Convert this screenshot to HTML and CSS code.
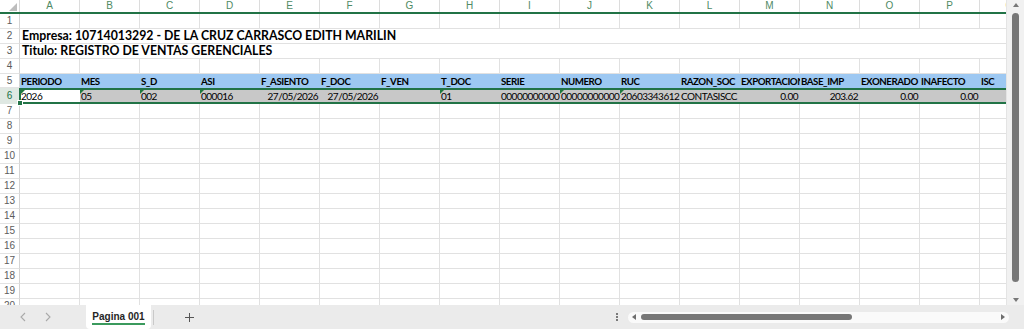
FILE: index.html
```html
<!DOCTYPE html>
<html lang="es">
<head>
<meta charset="utf-8">
<title>Pagina 001</title>
<link rel="stylesheet" href="styles.css">
</head>
<body>
<div class="app">
  <div class="main">
    <div class="sheet">
      <div class="row colhead">
        <div class="corner"><span class="corner-tri"></span></div>
        <div class="ch">A</div><div class="ch">B</div><div class="ch">C</div><div class="ch">D</div><div class="ch">E</div><div class="ch">F</div><div class="ch">G</div><div class="ch">H</div><div class="ch">I</div><div class="ch">J</div><div class="ch">K</div><div class="ch">L</div><div class="ch">M</div><div class="ch">N</div><div class="ch">O</div><div class="ch">P</div><div class="ch">Q</div>
      </div>
      <div class="row"><div class="rh">1</div><div class="c"></div><div class="c"></div><div class="c"></div><div class="c"></div><div class="c"></div><div class="c"></div><div class="c"></div><div class="c"></div><div class="c"></div><div class="c"></div><div class="c"></div><div class="c"></div><div class="c"></div><div class="c"></div><div class="c"></div><div class="c"></div><div class="c"></div></div>
      <div class="row"><div class="rh">2</div><div class="m">Empresa: 10714013292 - DE LA CRUZ CARRASCO EDITH MARILIN</div></div>
      <div class="row"><div class="rh">3</div><div class="m">Titulo: REGISTRO DE VENTAS GERENCIALES</div></div>
      <div class="row"><div class="rh">4</div><div class="c"></div><div class="c"></div><div class="c"></div><div class="c"></div><div class="c"></div><div class="c"></div><div class="c"></div><div class="c"></div><div class="c"></div><div class="c"></div><div class="c"></div><div class="c"></div><div class="c"></div><div class="c"></div><div class="c"></div><div class="c"></div><div class="c"></div></div>
      <div class="row hdr"><div class="rh">5</div><div class="c">PERIODO</div><div class="c">MES</div><div class="c">S_D</div><div class="c">ASI</div><div class="c">F_ASIENTO</div><div class="c">F_DOC</div><div class="c">F_VEN</div><div class="c">T_DOC</div><div class="c">SERIE</div><div class="c">NUMERO</div><div class="c">RUC</div><div class="c">RAZON_SOC</div><div class="c">EXPORTACION</div><div class="c">BASE_IMP</div><div class="c">EXONERADO</div><div class="c">INAFECTO</div><div class="c">ISC</div></div>
      <div class="row r6">
        <div class="rh rh-sel">6</div>
        <div class="sel">
          <div class="c a t">2026</div><div class="c t">05</div><div class="c t">002</div><div class="c t">000016</div><div class="c r">27/05/2026</div><div class="c r">27/05/2026</div><div class="c"></div><div class="c t">01</div><div class="c">00000000000</div><div class="c t">00000000000</div><div class="c t">20603343612</div><div class="c">CONTASISCC</div><div class="c r">0.00</div><div class="c r">203.62</div><div class="c r">0.00</div><div class="c r">0.00</div><div class="c"></div>
        </div>
      </div>
      <div class="row"><div class="rh">7</div><div class="c"></div><div class="c"></div><div class="c"></div><div class="c"></div><div class="c"></div><div class="c"></div><div class="c"></div><div class="c"></div><div class="c"></div><div class="c"></div><div class="c"></div><div class="c"></div><div class="c"></div><div class="c"></div><div class="c"></div><div class="c"></div><div class="c"></div></div>
      <div class="row"><div class="rh">8</div><div class="c"></div><div class="c"></div><div class="c"></div><div class="c"></div><div class="c"></div><div class="c"></div><div class="c"></div><div class="c"></div><div class="c"></div><div class="c"></div><div class="c"></div><div class="c"></div><div class="c"></div><div class="c"></div><div class="c"></div><div class="c"></div><div class="c"></div></div>
      <div class="row"><div class="rh">9</div><div class="c"></div><div class="c"></div><div class="c"></div><div class="c"></div><div class="c"></div><div class="c"></div><div class="c"></div><div class="c"></div><div class="c"></div><div class="c"></div><div class="c"></div><div class="c"></div><div class="c"></div><div class="c"></div><div class="c"></div><div class="c"></div><div class="c"></div></div>
      <div class="row"><div class="rh">10</div><div class="c"></div><div class="c"></div><div class="c"></div><div class="c"></div><div class="c"></div><div class="c"></div><div class="c"></div><div class="c"></div><div class="c"></div><div class="c"></div><div class="c"></div><div class="c"></div><div class="c"></div><div class="c"></div><div class="c"></div><div class="c"></div><div class="c"></div></div>
      <div class="row"><div class="rh">11</div><div class="c"></div><div class="c"></div><div class="c"></div><div class="c"></div><div class="c"></div><div class="c"></div><div class="c"></div><div class="c"></div><div class="c"></div><div class="c"></div><div class="c"></div><div class="c"></div><div class="c"></div><div class="c"></div><div class="c"></div><div class="c"></div><div class="c"></div></div>
      <div class="row"><div class="rh">12</div><div class="c"></div><div class="c"></div><div class="c"></div><div class="c"></div><div class="c"></div><div class="c"></div><div class="c"></div><div class="c"></div><div class="c"></div><div class="c"></div><div class="c"></div><div class="c"></div><div class="c"></div><div class="c"></div><div class="c"></div><div class="c"></div><div class="c"></div></div>
      <div class="row"><div class="rh">13</div><div class="c"></div><div class="c"></div><div class="c"></div><div class="c"></div><div class="c"></div><div class="c"></div><div class="c"></div><div class="c"></div><div class="c"></div><div class="c"></div><div class="c"></div><div class="c"></div><div class="c"></div><div class="c"></div><div class="c"></div><div class="c"></div><div class="c"></div></div>
      <div class="row"><div class="rh">14</div><div class="c"></div><div class="c"></div><div class="c"></div><div class="c"></div><div class="c"></div><div class="c"></div><div class="c"></div><div class="c"></div><div class="c"></div><div class="c"></div><div class="c"></div><div class="c"></div><div class="c"></div><div class="c"></div><div class="c"></div><div class="c"></div><div class="c"></div></div>
      <div class="row"><div class="rh">15</div><div class="c"></div><div class="c"></div><div class="c"></div><div class="c"></div><div class="c"></div><div class="c"></div><div class="c"></div><div class="c"></div><div class="c"></div><div class="c"></div><div class="c"></div><div class="c"></div><div class="c"></div><div class="c"></div><div class="c"></div><div class="c"></div><div class="c"></div></div>
      <div class="row"><div class="rh">16</div><div class="c"></div><div class="c"></div><div class="c"></div><div class="c"></div><div class="c"></div><div class="c"></div><div class="c"></div><div class="c"></div><div class="c"></div><div class="c"></div><div class="c"></div><div class="c"></div><div class="c"></div><div class="c"></div><div class="c"></div><div class="c"></div><div class="c"></div></div>
      <div class="row"><div class="rh">17</div><div class="c"></div><div class="c"></div><div class="c"></div><div class="c"></div><div class="c"></div><div class="c"></div><div class="c"></div><div class="c"></div><div class="c"></div><div class="c"></div><div class="c"></div><div class="c"></div><div class="c"></div><div class="c"></div><div class="c"></div><div class="c"></div><div class="c"></div></div>
      <div class="row"><div class="rh">18</div><div class="c"></div><div class="c"></div><div class="c"></div><div class="c"></div><div class="c"></div><div class="c"></div><div class="c"></div><div class="c"></div><div class="c"></div><div class="c"></div><div class="c"></div><div class="c"></div><div class="c"></div><div class="c"></div><div class="c"></div><div class="c"></div><div class="c"></div></div>
      <div class="row"><div class="rh">19</div><div class="c"></div><div class="c"></div><div class="c"></div><div class="c"></div><div class="c"></div><div class="c"></div><div class="c"></div><div class="c"></div><div class="c"></div><div class="c"></div><div class="c"></div><div class="c"></div><div class="c"></div><div class="c"></div><div class="c"></div><div class="c"></div><div class="c"></div></div>
      <div class="row"><div class="rh">20</div><div class="c"></div><div class="c"></div><div class="c"></div><div class="c"></div><div class="c"></div><div class="c"></div><div class="c"></div><div class="c"></div><div class="c"></div><div class="c"></div><div class="c"></div><div class="c"></div><div class="c"></div><div class="c"></div><div class="c"></div><div class="c"></div><div class="c"></div></div>
    </div>
    <div class="vscroll">
      <span class="arr-up"></span>
      <span class="vthumb"></span>
      <span class="arr-down"></span>
    </div>
  </div>
  <div class="tabbar">
    <svg class="nav nav-l" width="6" height="10" viewBox="0 0 6 10"><path d="M5 1 L1 5 L5 9" fill="none" stroke="#a9a9a9" stroke-width="1.1"/></svg>
    <svg class="nav nav-r" width="6" height="10" viewBox="0 0 6 10"><path d="M1 1 L5 5 L1 9" fill="none" stroke="#a9a9a9" stroke-width="1.1"/></svg>
    <div class="tab"><span class="tab-label">Pagina 001</span></div>
    <span class="tab-sep"></span>
    <svg class="plus" width="9" height="9" viewBox="0 0 9 9"><path d="M4.5 0 V9 M0 4.5 H9" fill="none" stroke="#555" stroke-width="1"/></svg>
    <span class="dots"><i></i><i></i><i></i></span>
    <div class="htrack">
      <span class="arr-left"></span>
      <span class="hthumb"></span>
      <span class="arr-right"></span>
    </div>
  </div>
</div>
</body>
</html>
```

FILE: styles.css
```css
html, body {
  margin: 0;
  padding: 0;
}
body {
  width: 1024px;
  height: 329px;
  overflow: hidden;
  background: #ffffff;
  font-family: Lato, "Liberation Sans", sans-serif;
  color: #000;
}
.app {
  display: flex;
  flex-direction: column;
  height: 329px;
}
.main {
  display: flex;
  height: 305px;
  flex: 0 0 305px;
}
.sheet {
  width: 1006px;
  flex: 0 0 1006px;
  overflow: hidden;
}
.row {
  display: flex;
  height: 15px;
}
.colhead {
  height: 14px;
  box-sizing: border-box;
  border-bottom: 2px solid #217346;
}
.corner {
  flex: 0 0 20px;
  box-sizing: border-box;
  border-right: 1px solid #d9d9d9;
  position: relative;
}
.corner-tri {
  position: absolute;
  right: 2px;
  bottom: 1px;
  width: 0;
  height: 0;
  border-left: 8px solid transparent;
  border-bottom: 8px solid #bdbdbd;
}
.ch {
  flex: 0 0 60px;
  box-sizing: border-box;
  border-right: 1px solid #dcdcdc;
  text-align: center;
  font: 10px/12px "Liberation Sans", sans-serif;
  color: #4f8a64;
}
.rh {
  flex: 0 0 20px;
  box-sizing: border-box;
  border-right: 1px solid #d4d4d4;
  border-bottom: 1px solid #e3e3e3;
  text-align: center;
  font: 10px/14px "Liberation Sans", sans-serif;
  color: #5c5c5c;
}
.c {
  flex: 0 0 60px;
  box-sizing: border-box;
  border-right: 1px solid #e1e1e1;
  border-bottom: 1px solid #e1e1e1;
  padding: 0 2px;
  overflow: hidden;
  white-space: nowrap;
  font-size: 10px;
  letter-spacing: -0.5px;
  line-height: 14px;
  position: relative;
}
.m {
  flex: 1;
  border-bottom: 1px solid #e1e1e1;
  padding-left: 2px;
  white-space: nowrap;
  overflow: hidden;
  font-weight: 700;
  font-size: 12.3px;
  letter-spacing: 0;
  line-height: 14px;
}
.hdr {
  height: 14px;
  background: #9dc8f2;
}
.hdr .rh {
  background: #fff;
  line-height: 13px;
}
.hdr .c {
  border: none;
  font-weight: 700;
  font-size: 9.7px;
  letter-spacing: -0.45px;
  padding-left: 1px;
}
.r6 {
  height: 16px;
}
.rh-sel {
  flex: 0 0 19px;
  border-right: none;
  border-bottom: none;
  background: #dfe8e2;
  color: #217346;
  line-height: 16px;
}
.sel {
  flex: 1;
  display: flex;
  box-sizing: border-box;
  height: 16px;
  border: 2px solid #217346;
  border-right: none;
  background: #c8c8c8;
  position: relative;
}
.sel .c {
  border: none;
  height: 12px;
  line-height: 12px;
  padding-left: 1px;
}
.sel .c.a {
  flex: 0 0 59px;
  background: #fff;
  padding-left: 0;
}
.sel::after {
  content: "";
  position: absolute;
  left: -4px;
  bottom: -4px;
  width: 4px;
  height: 4px;
  background: #217346;
  border: 1px solid #fff;
}
.c.r {
  text-align: right;
  padding-right: 2px;
}
.t::before {
  content: "";
  position: absolute;
  top: 0;
  left: 0;
  width: 0;
  height: 0;
  border-top: 4px solid #1d7a3c;
  border-right: 4px solid transparent;
}
.vscroll {
  flex: 0 0 18px;
  box-sizing: border-box;
  border-left: 1px solid #e4e4e4;
  background: #f1f1f1;
  display: flex;
  flex-direction: column;
  align-items: center;
  padding: 3px 0 3px;
}
.arr-up {
  width: 0;
  height: 0;
  border-left: 3px solid transparent;
  border-right: 3px solid transparent;
  border-bottom: 4px solid #777;
}
.vthumb {
  margin-top: 6px;
  width: 7px;
  height: 269px;
  border-radius: 4px;
  background: #777;
}
.arr-down {
  margin-top: auto;
  width: 0;
  height: 0;
  border-left: 3px solid transparent;
  border-right: 3px solid transparent;
  border-top: 4px solid #777;
}
.tabbar {
  flex: 0 0 24px;
  display: flex;
  align-items: center;
  background: #ebebeb;
  font-family: "Liberation Sans", sans-serif;
}
.nav-l {
  margin-left: 20px;
}
.nav-r {
  margin-left: 19px;
}
.tab {
  margin-left: 35px;
  width: 65px;
  height: 24px;
  background: #fff;
  border-radius: 0 0 4px 4px;
  display: flex;
  justify-content: center;
  align-items: center;
}
.tab-label {
  font-size: 10px;
  font-weight: 700;
  color: #262626;
  line-height: 13px;
  padding-top: 1px;
  border-bottom: 2px solid #3b9a5d;
}
.tab-sep {
  margin-left: 2px;
  width: 1px;
  height: 15px;
  background: #c9c9c9;
}
.plus {
  margin-left: 31px;
}
.dots {
  margin-left: auto;
  display: flex;
  flex-direction: column;
  gap: 1px;
  width: 2px;
}
.dots i {
  width: 2px;
  height: 2px;
  background: #555;
  border-radius: 1px;
}
.htrack {
  margin-left: 10px;
  margin-right: 15px;
  width: 381px;
  height: 11px;
  border-radius: 6px;
  background: #fafafa;
  display: flex;
  align-items: center;
  box-sizing: border-box;
  padding: 0 4px 0 4px;
}
.arr-left {
  width: 0;
  height: 0;
  border-top: 3px solid transparent;
  border-bottom: 3px solid transparent;
  border-right: 4px solid #6e6e6e;
}
.hthumb {
  margin-left: 5px;
  width: 211px;
  height: 6px;
  border-radius: 3px;
  background: #777;
}
.arr-right {
  margin-left: auto;
  width: 0;
  height: 0;
  border-top: 3px solid transparent;
  border-bottom: 3px solid transparent;
  border-left: 4px solid #6e6e6e;
}
```
